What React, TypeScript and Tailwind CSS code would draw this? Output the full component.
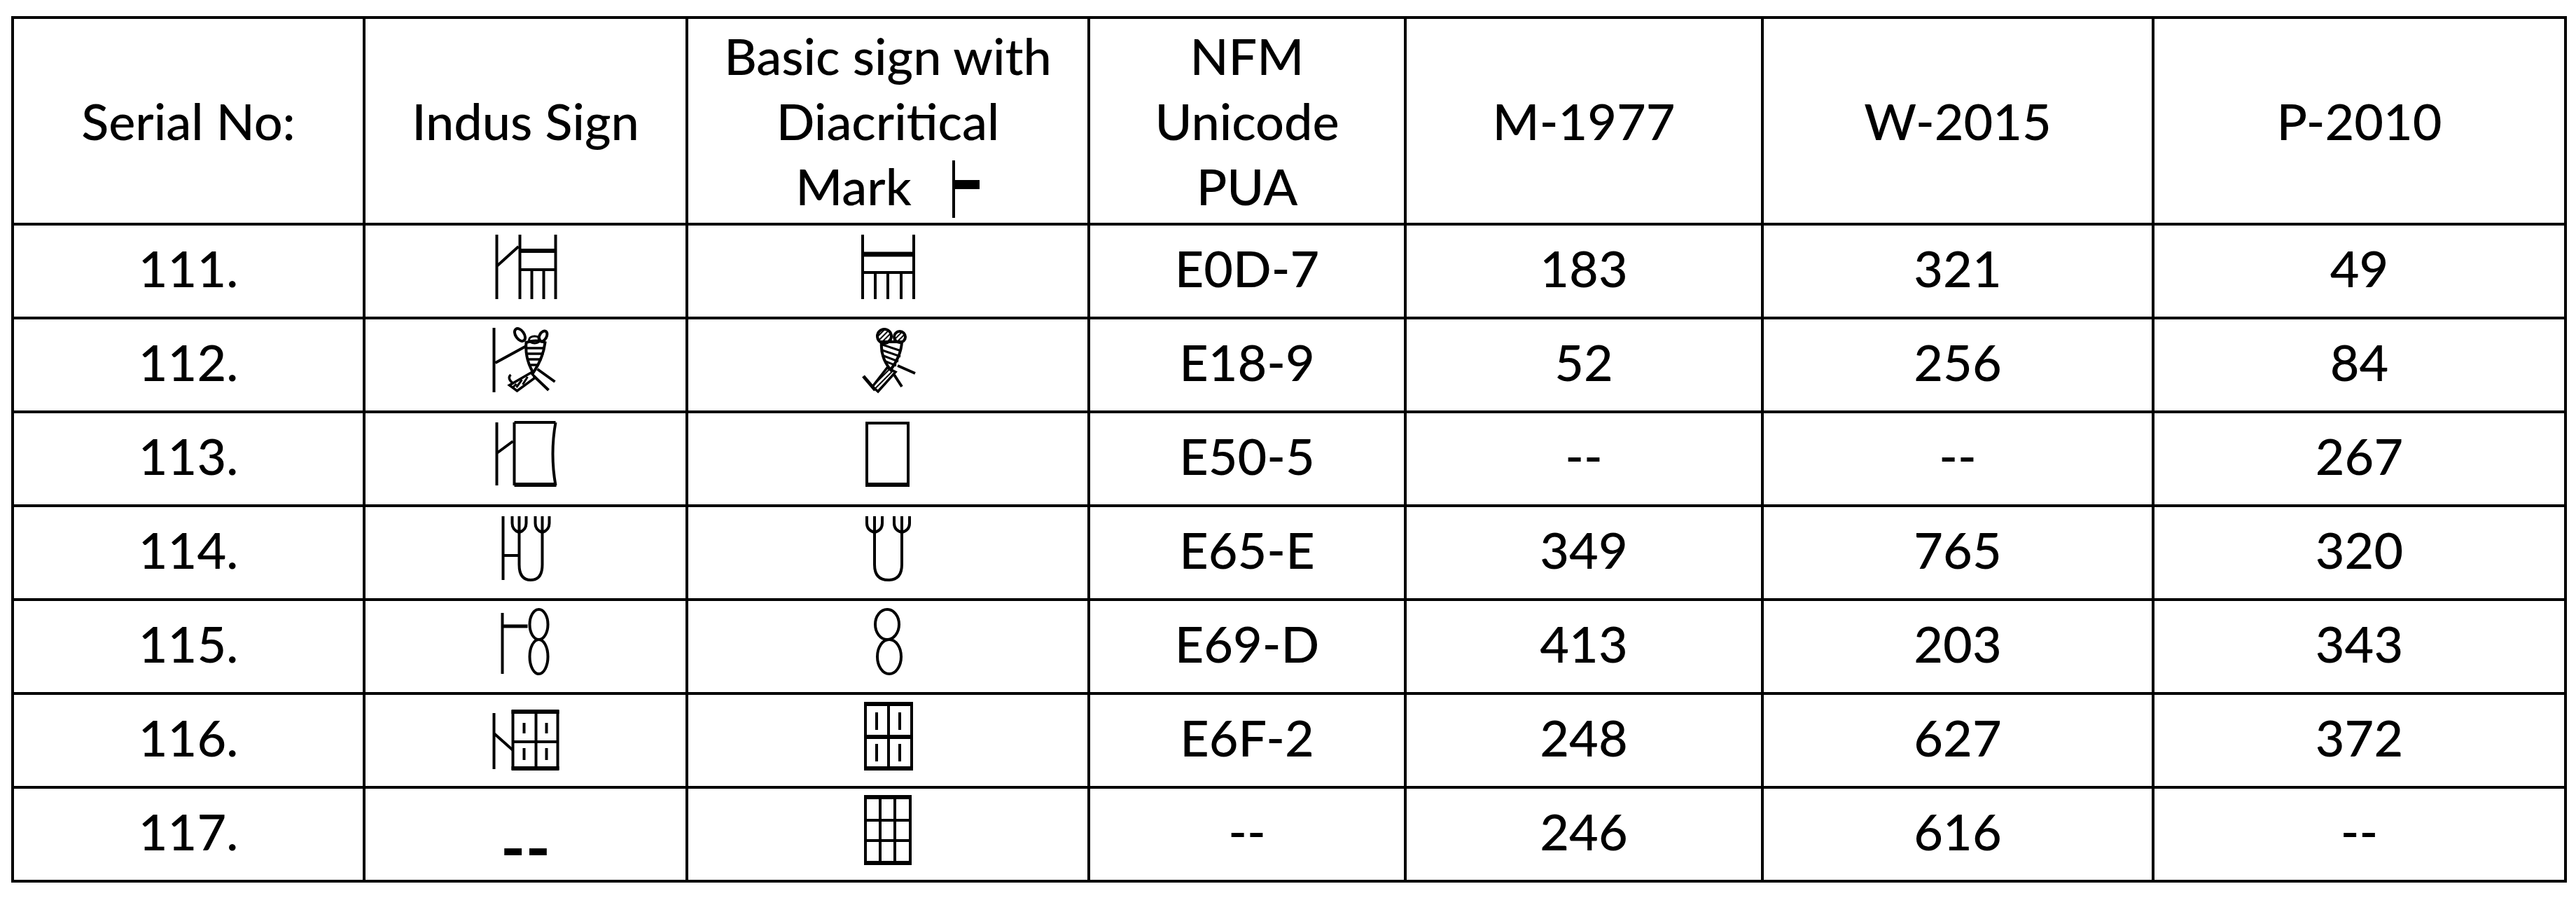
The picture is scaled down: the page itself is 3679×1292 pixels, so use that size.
import React from "react";

// column centre x (absolute page px) for the two sign columns
const INDUS_X = 750.5;
const BASIC_X = 1268;
const ROW_TOP = 322;
const ROW_H = 134;

const Glyph = ({
  cx,
  row,
  children,
}: {
  cx: number;
  row: number;
  children: React.ReactNode;
}) => {
  const top = ROW_TOP + ROW_H * row;
  return (
    <svg
      width="130"
      height="120"
      viewBox={`${cx - 65} ${top} 130 120`}
      fill="none"
      stroke="black"
      strokeWidth="4"
    >
      {children}
    </svg>
  );
};

const Sign111I = () => (
  <Glyph cx={INDUS_X} row={0}>
    <path d="M709 335V427M709 380L740 352M742 335V427M793 335V427M742 385H793M759 385V427M776 385V427" />
    <path d="M742 358H793" strokeWidth="6" />
  </Glyph>
);

const Sign111B = () => (
  <Glyph cx={BASIC_X} row={0}>
    <path d="M1232 335V427M1305 335V427M1232 389H1305M1250 389V427M1268 389V427M1287 389V427" />
    <path d="M1232 363H1305" strokeWidth="7" />
  </Glyph>
);

const Sign112I = () => (
  <Glyph cx={INDUS_X} row={1}>
    <path d="M705 468V560M707 518L751 494" />
    <ellipse cx="742" cy="478" rx="6" ry="10" transform="rotate(-35 742 478)" />
    <ellipse cx="775" cy="480" rx="5" ry="8" transform="rotate(30 775 480)" />
    <ellipse cx="763" cy="485" rx="8" ry="5" strokeWidth="3" />
    <path d="M751 489Q749 512 761 532Q775 512 778 489Q765 484 751 489Z" />
    <path d="M751 497H777M752 505H776M754 513H773M757 521H769" strokeWidth="3.5" />
    <path d="M758 532L764 539L738 558L727 550Z" strokeWidth="3.5" />
    <path d="M753 538L746 549M745 542L737 553M737 548L732 553" strokeWidth="3" />
    <path d="M733 548Q723 540 729 535" strokeWidth="3.5" />
    <path d="M767 527L792 545M762 537L783 557" />
  </Glyph>
);

const Sign112B = () => (
  <Glyph cx={BASIC_X} row={1}>
    <defs>
      <pattern id="hatch112" width="5" height="5" patternUnits="userSpaceOnUse" patternTransform="rotate(45)">
        <rect width="2" height="5" fill="black" stroke="none" />
      </pattern>
    </defs>
    <ellipse cx="1263" cy="480" rx="10" ry="10" fill="url(#hatch112)" />
    <ellipse cx="1285" cy="481" rx="8" ry="8" fill="url(#hatch112)" />
    <path d="M1259 488Q1257 510 1272 528Q1287 508 1288 488Z" />
    <path d="M1260 492L1287 501M1260 500L1286 509M1262 508L1283 516M1265 516L1280 522" strokeWidth="3" />
    <path d="M1267 525L1279 531L1254 559L1246 552Z" fill="url(#hatch112)" strokeWidth="3.5" />
    <path d="M1233 537L1250 557" strokeWidth="5" />
    <path d="M1282 522L1307 533M1277 535L1288 552" />
  </Glyph>
);

const Sign113I = () => (
  <Glyph cx={INDUS_X} row={2}>
    <path d="M709 603V693M709 647L732 630M734 603V693M734 603H793M793 603Q785 648 793 693" />
    <path d="M734 692H794" strokeWidth="6" />
  </Glyph>
);

const Sign113B = () => (
  <Glyph cx={BASIC_X} row={2}>
    <rect x="1238" y="604" width="59" height="88" />
    <path d="M1236 692H1299" strokeWidth="6" />
  </Glyph>
);

const Sign114I = () => (
  <Glyph cx={INDUS_X} row={3}>
    <path d="M718 737V828M718 793H741" />
    <path d="M741 757V806Q741 828 757.5 828Q774 828 774 806V757" />
    <path d="M741 737V760M731 737V747Q731 757 741 760M751 737V747Q751 757 741 760" />
    <path d="M774 737V760M764 737V747Q764 757 774 760M784 737V747Q784 757 774 760" />
  </Glyph>
);

const Sign114B = () => (
  <Glyph cx={BASIC_X} row={3}>
    <path d="M1249 757V806Q1249 828 1268.5 828Q1288 828 1288 806V757" />
    <path d="M1249 737V760M1238 737V747Q1238 757 1249 760M1260 737V747Q1260 757 1249 760" />
    <path d="M1288 737V760M1277 737V747Q1277 757 1288 760M1299 737V747Q1299 757 1288 760" />
  </Glyph>
);

const Sign115I = () => (
  <Glyph cx={INDUS_X} row={4}>
    <path d="M717 875V962" />
    <path d="M717 894H753" strokeWidth="5" />
    <ellipse cx="769" cy="891.5" rx="13" ry="21.5" />
    <ellipse cx="769" cy="937.5" rx="13" ry="24.5" />
  </Glyph>
);

const Sign115B = () => (
  <Glyph cx={BASIC_X} row={4}>
    <ellipse cx="1267" cy="891.5" rx="17" ry="21.5" />
    <ellipse cx="1270" cy="937.5" rx="17" ry="24.5" />
  </Glyph>
);

const Sign116I = () => (
  <Glyph cx={INDUS_X} row={5}>
    <path d="M705 1018V1098M705 1047L732 1071" />
    <rect x="732" y="1016" width="64" height="81" />
    <path d="M730 1016H798M730 1097H798" strokeWidth="6" />
    <path d="M765 1016V1097M732 1059H796" />
    <path d="M748 1032V1047M780 1032V1047M748 1068V1085M780 1068V1085" />
  </Glyph>
);

const Sign116B = () => (
  <Glyph cx={BASIC_X} row={5}>
    <rect x="1236" y="1005" width="66" height="92" />
    <path d="M1234 1005H1304M1234 1097H1304" strokeWidth="6" />
    <path d="M1269 1005V1097" />
    <path d="M1236 1052H1302" strokeWidth="6" />
    <path d="M1252 1017V1042M1285 1017V1042M1252 1062V1087M1285 1062V1087" />
  </Glyph>
);

const Sign117B = () => (
  <Glyph cx={BASIC_X} row={6}>
    <rect x="1236" y="1138" width="64" height="94" />
    <path d="M1234 1138H1302M1234 1232H1302" strokeWidth="6" />
    <path d="M1257 1138V1232M1278 1138V1232M1236 1171H1300M1236 1200H1300" />
  </Glyph>
);

const DiacriticMark = () => (
  <svg
    width="40"
    height="82"
    viewBox="0 0 40 82"
    className="ml-[58px] inline-block align-[-18px]"
  >
    <path d="M2 0V82" stroke="black" strokeWidth="4" />
    <rect x="2" y="28" width="37" height="13" fill="black" />
  </svg>
);

const rows = [
  { no: "111.", indus: <Sign111I />, basic: <Sign111B />, nfm: "E0D-7", m: "183", w: "321", p: "49" },
  { no: "112.", indus: <Sign112I />, basic: <Sign112B />, nfm: "E18-9", m: "52", w: "256", p: "84" },
  { no: "113.", indus: <Sign113I />, basic: <Sign113B />, nfm: "E50-5", m: "--", w: "--", p: "267" },
  { no: "114.", indus: <Sign114I />, basic: <Sign114B />, nfm: "E65-E", m: "349", w: "765", p: "320" },
  { no: "115.", indus: <Sign115I />, basic: <Sign115B />, nfm: "E69-D", m: "413", w: "203", p: "343" },
  { no: "116.", indus: <Sign116I />, basic: <Sign116B />, nfm: "E6F-2", m: "248", w: "627", p: "372" },
  {
    no: "117.",
    indus: <span className="mt-[44px] text-[96px] font-bold leading-none">--</span>,
    basic: <Sign117B />,
    nfm: "--",
    m: "246",
    w: "616",
    p: "--",
  },
];

const headCell =
  "h-[295px] border-r-4 border-b-4 border-black flex flex-col items-center justify-center text-center leading-[93px]";
const bodyCell =
  "h-[134px] border-r-4 border-b-4 border-black flex items-center justify-center pb-[10px]";

export default function App() {
  return (
    <div className="min-h-screen bg-white pt-[23px] pl-[16px] font-['Lato',sans-serif] text-[72px] font-medium text-black">
      <div className="grid w-max grid-cols-[502px_461px_574px_452px_510px_558px_589px] border-l-4 border-t-4 border-black">
        <div className={headCell}>Serial No:</div>
        <div className={headCell}>Indus Sign</div>
        <div className={headCell}>
          <div>Basic sign with</div>
          <div>Diacritical</div>
          <div>
            Mark
            <DiacriticMark />
          </div>
        </div>
        <div className={headCell}>
          <div>NFM</div>
          <div>Unicode</div>
          <div>PUA</div>
        </div>
        <div className={headCell}>M-1977</div>
        <div className={headCell}>W-2015</div>
        <div className={headCell}>P-2010</div>

        {rows.map((r) => (
          <React.Fragment key={r.no}>
            <div className={bodyCell}>{r.no}</div>
            <div className={bodyCell}>{r.indus}</div>
            <div className={bodyCell}>{r.basic}</div>
            <div className={bodyCell}>{r.nfm}</div>
            <div className={bodyCell}>{r.m}</div>
            <div className={bodyCell}>{r.w}</div>
            <div className={bodyCell}>{r.p}</div>
          </React.Fragment>
        ))}
      </div>
    </div>
  );
}
